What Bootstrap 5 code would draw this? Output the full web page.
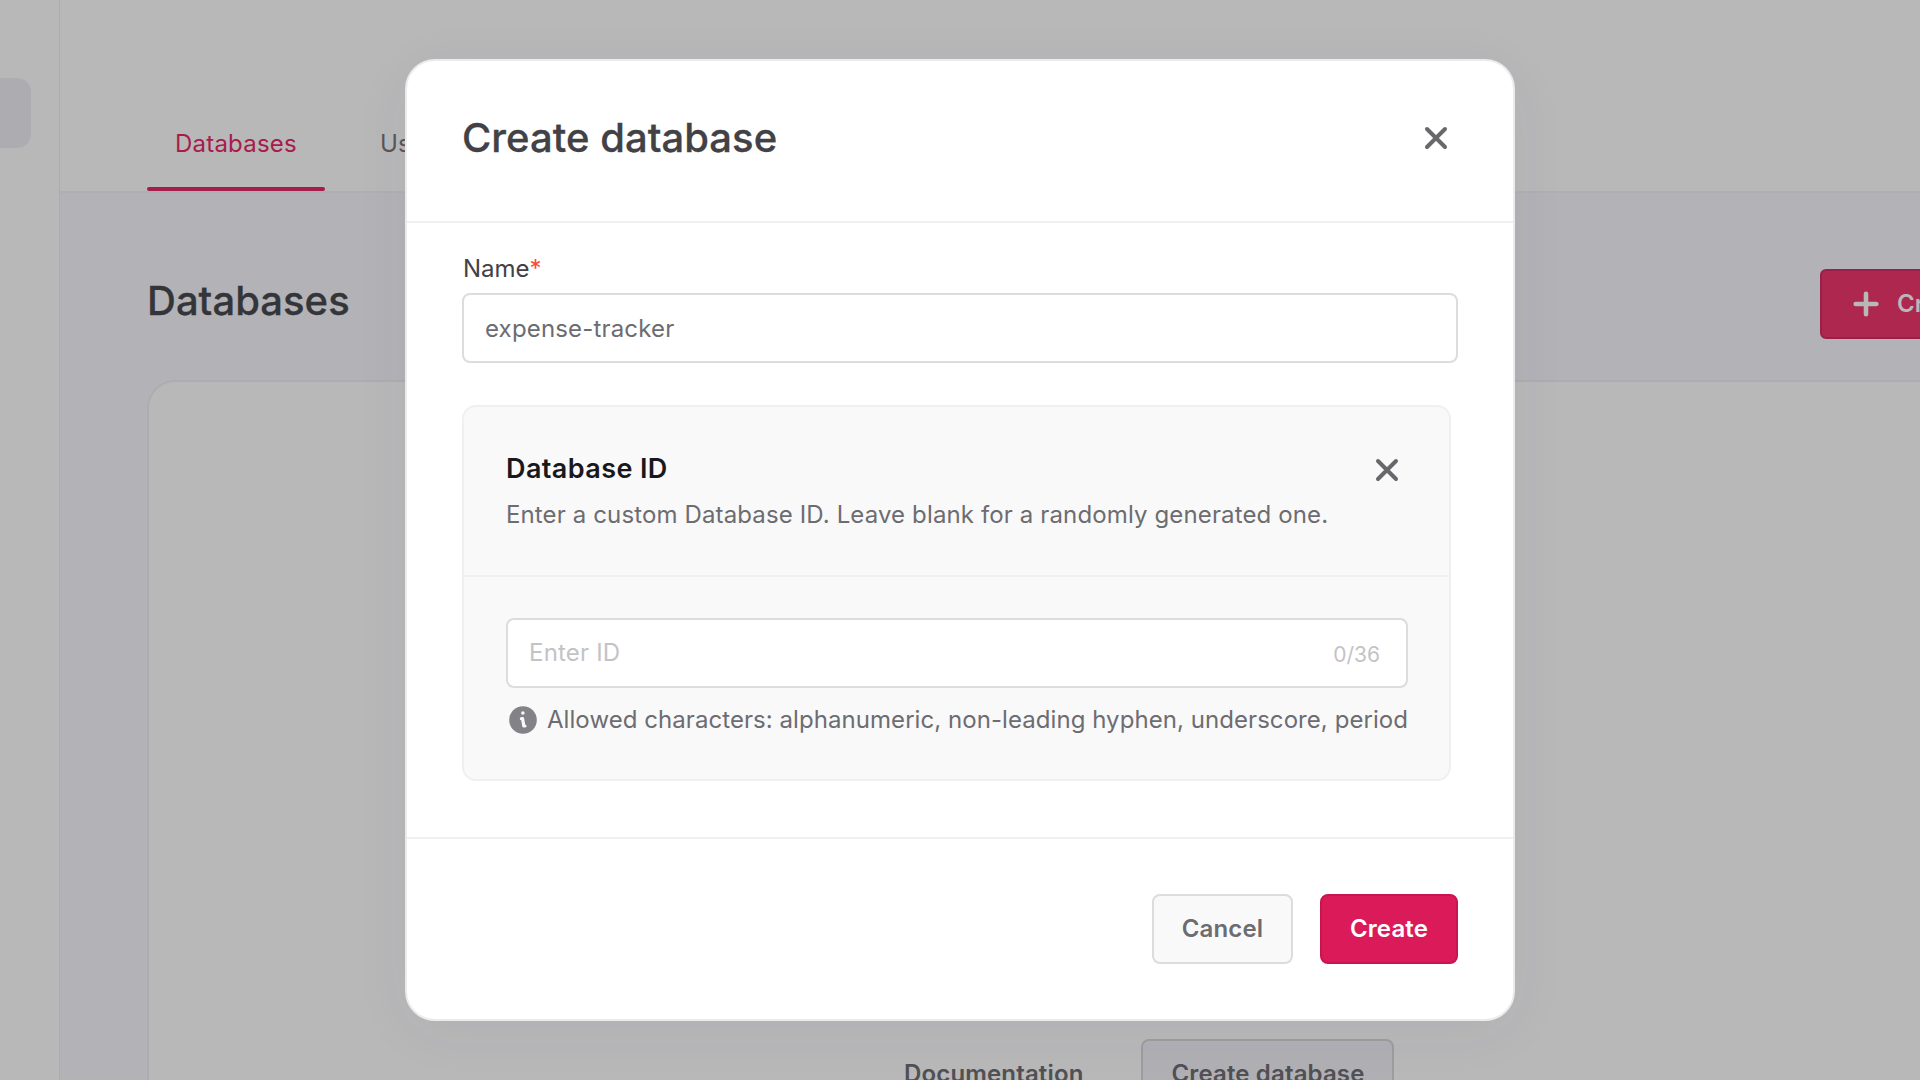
<!DOCTYPE html>
<html lang="en">
<head>
<meta charset="utf-8">
<meta name="viewport" content="width=device-width, initial-scale=1">
<title>Create database</title>
<link href="https://cdn.jsdelivr.net/npm/bootstrap@5.3.0/dist/css/bootstrap.min.css" rel="stylesheet">
<style>
body { font-family: Inter, "Liberation Sans", sans-serif; font-size: 24px; line-height: 36px; color: #6c6c71; background: #b8b8b9; }
.shell { width: 1920px; height: 1080px; }
.side { width: 60px; border-right: 1px solid #adadb1; padding-top: 78px; }
.side-item { width: 31px; height: 70px; border-radius: 0 14px 14px 0; background: #adacb1; }
.main-area { background: #b3b2b7; }
.top-tabs { height: 193px; background: #b8b8b9; border-bottom: 2px solid #afafb1; padding-left: 87px; gap: 27px; }
.top-tabs .nav-link { height: 95px; padding: 30px 28px 0; color: #56565c; line-height: 36px; letter-spacing: .22px; }
.top-tabs .nav-link.active { color: #a71c4b; position: relative; }
.top-tabs .nav-link.active::after { content: ""; position: absolute; left: 0; right: 0; bottom: 0; height: 4px; border-radius: 2px; background: #a51d4c; }
.page-head { height: 187px; padding: 41px 0 6px 87px; }
.title-text { font-size: 40px; line-height: 48px; font-weight: 500; letter-spacing: .02px; margin: 0; color: #414146; -webkit-text-stroke: .3px currentColor; }
.page-head .title-text { color: #343539; margin-top: -6px; }
.btn-add { width: 221px; height: 70px; border-radius: 6px; background: #ad274f; border: 2px solid #9a1f49; color: #b8b8b9; padding: 0 31px; gap: 18px; font-size: 24px; font-weight: 600; margin-right: -121px; }
.panel { margin-left: 87px; background: #b8b8b9; border: 2px solid #adadb1; border-right: 0; border-bottom: 0; border-top-left-radius: 28px; padding: 657px 0 0 754px; gap: 57px; }
.ghost-btn { height: 70px; font-weight: 600; font-size: 24px; color: #505055; padding: 0; white-space: nowrap; letter-spacing: .15px; }
.ghost-btn.boxed { width: 253px; border: 2px solid #9d9da0; border-radius: 8px; background: #b0afb4; }
.dialog-layer { position: absolute; inset: 0; padding-top: 59px; padding-left: 405px; }
.dialog-box { width: 1110px; height: 962px; border: 2px solid #ebebee; border-radius: 30px; background: #fff; box-shadow: 0 10px 60px rgba(60,60,70,.05); }
.dialog-box .modal-header { height: 162px; padding: 0 65px 6px 55px; border-bottom: 2px solid #f0f0f2; border-radius: 0; }
.dialog-box .modal-body { padding: 28px 55px 0; }
.dialog-box .modal-footer { height: 182px; padding: 0 55px 0; gap: 27px; border-top: 2px solid #f0f0f2; }
.dialog-box .modal-footer > * { margin: 0; }
.x-btn { border: 0; background: none; padding: 0; line-height: 0; }
.name-label { margin: 0 0 6px; padding-left: 1px; color: #414146; line-height: 36px; display: block; }
.req { color: #ff453a; }
.field { height: 70px; border: 2px solid #dcdcde; border-radius: 8px; font-size: 24px; color: #6c6c71; padding: 0 21px; background: #fff; letter-spacing: .17px; }
.id-card { width: 989px; height: 376px; margin-top: 42px; background: #f9f9fa; border: 2px solid #f0f0f2; border-radius: 14px; }
.id-head { height: 170px; border-bottom: 2px solid #f0f0f2; padding: 44px 50px 0 42px; }
.id-head h2 { font-size: 27px; line-height: 36px; font-weight: 600; letter-spacing: .4px; color: #19191d; margin: 0 0 10px; }
.id-head p { letter-spacing: .13px; }
.id-head .x-btn { padding-top: 7px; }
.id-body { padding: 41px 41px 0 42px; }
.field input { border: 0; outline: 0; padding: 0; background: none; color: #6c6c71; letter-spacing: .2px; }
.field input::placeholder { color: #c3c3c6; opacity: 1; }
.counter { font-size: 21px; color: #c3c3c6; padding: 3px 5px 0 0; letter-spacing: 0; }
.hint { margin-top: 14px; gap: 10px; padding-left: 3px; white-space: nowrap; letter-spacing: .06px; }
.act { height: 70px; border-radius: 8px; font-size: 24px; font-weight: 600; padding: 0; letter-spacing: .15px; }
.act-cancel { width: 141px; background: #f9f9fa; border: 2px solid #dcdcde; color: #6c6c71; }
.act-create { width: 138px; background: #db1a5a; border: 2px solid #c9154f; color: #fff; }
</style>
</head>
<body class="overflow-hidden">
<div class="shell d-flex overflow-hidden position-relative">
  <aside class="side flex-shrink-0"><div class="side-item"></div></aside>
  <main class="main-area flex-grow-1 d-flex flex-column overflow-hidden">
    <nav class="top-tabs nav flex-nowrap align-items-end flex-shrink-0">
      <a class="nav-link active" href="#">Databases</a>
      <a class="nav-link" href="#">Us</a>
    </nav>
    <div class="page-head d-flex align-items-center justify-content-between flex-shrink-0">
      <h1 class="title-text">Databases</h1>
      <button class="btn btn-add d-flex align-items-center flex-shrink-0 text-nowrap">
        <svg class="flex-shrink-0" width="26" height="26" viewBox="0 0 26 26" fill="none" stroke="#b8b8b9" stroke-width="4.6" stroke-linecap="round"><path d="M13 2.7v20.6M2.7 13h20.6"/></svg>
        <span>Create database</span>
      </button>
    </div>
    <section class="panel flex-grow-1 d-flex align-items-start">
      <button class="btn ghost-btn">Documentation</button>
      <button class="btn ghost-btn boxed">Create database</button>
    </section>
  </main>

  <div class="dialog-layer">
    <div class="dialog-box d-flex flex-column">
      <div class="modal-header d-flex align-items-center justify-content-between flex-shrink-0">
        <h4 class="title-text">Create database</h4>
        <button class="x-btn" aria-label="Close"><svg width="24" height="24" viewBox="0 0 24 24" fill="none" stroke="#68686c" stroke-width="4" stroke-linecap="round"><path d="M3 3l18 18M21 3L3 21"/></svg></button>
      </div>
      <div class="modal-body flex-grow-1">
        <label class="name-label" for="db-name">Name<span class="req">*</span></label>
        <input id="db-name" class="field w-100 d-block" type="text" value="expense-tracker">
        <div class="id-card">
          <div class="id-head d-flex justify-content-between align-items-start">
            <div>
              <h2>Database ID</h2>
              <p class="m-0 text-nowrap">Enter a custom Database ID. Leave blank for a randomly generated one.</p>
            </div>
            <button class="x-btn" aria-label="Remove"><svg width="24" height="24" viewBox="0 0 24 24" fill="none" stroke="#68686c" stroke-width="4" stroke-linecap="round"><path d="M3 3l18 18M21 3L3 21"/></svg></button>
          </div>
          <div class="id-body">
            <div class="field d-flex align-items-center">
              <input class="flex-grow-1" type="text" placeholder="Enter ID">
              <span class="counter">0/36</span>
            </div>
            <div class="hint d-flex align-items-center">
              <svg class="flex-shrink-0" width="28" height="28" viewBox="0 0 28 28"><circle cx="14" cy="14" r="13.8" fill="#828287"/><circle cx="13.9" cy="7" r="1.8" fill="#f9f9fa"/><path d="M12.4 12.7h1.2l1.2 7.3h1.2" fill="none" stroke="#f9f9fa" stroke-width="3.2" stroke-linecap="round" stroke-linejoin="round"/></svg>
              <span>Allowed characters: alphanumeric, non-leading hyphen, underscore, period</span>
            </div>
          </div>
        </div>
      </div>
      <div class="modal-footer d-flex align-items-center justify-content-end flex-shrink-0">
        <button class="btn act act-cancel">Cancel</button>
        <button class="btn act act-create">Create</button>
      </div>
    </div>
  </div>
</div>
<script src="https://cdn.jsdelivr.net/npm/bootstrap@5.3.0/dist/js/bootstrap.bundle.min.js"></script>
</body>
</html>
